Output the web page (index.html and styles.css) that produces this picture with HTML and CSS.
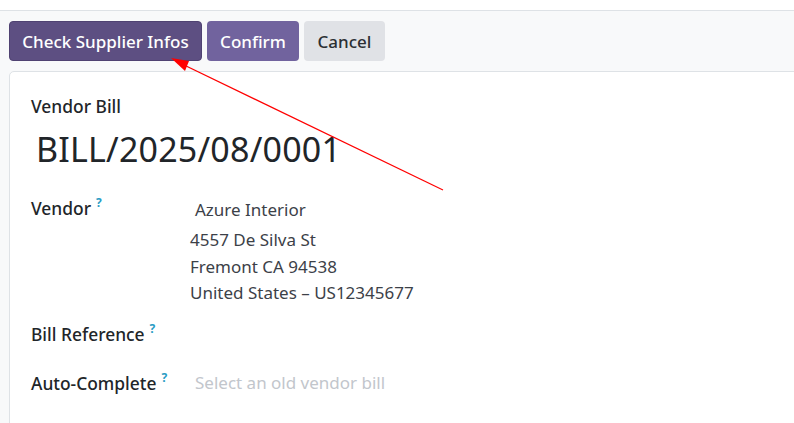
FILE: index.html
```html
<!DOCTYPE html>
<html>
<head>
<meta charset="utf-8">
<link rel="stylesheet" href="styles.css">
</head>
<body>
<div class="page">
  <div class="topstrip"></div>
  <div class="panel">
    <button class="btn btn-dark">Check Supplier Infos</button>
    <button class="btn btn-primary">Confirm</button>
    <button class="btn btn-light">Cancel</button>
  </div>
  <div class="sheet">
    <div class="doc-label">Vendor Bill</div>
    <h1 class="doc-title">BILL/2025/08/0001</h1>
    <div class="fields">
      <div class="label">Vendor<sup class="help">?</sup></div>
      <div class="value">
        <div class="partner">Azure Interior</div>
        <div class="addr">4557 De Silva St</div>
        <div class="addr">Fremont CA 94538</div>
        <div class="addr">United States – US12345677</div>
      </div>
      <div class="label row-ref">Bill Reference<sup class="help">?</sup></div>
      <div class="value row-ref"></div>
      <div class="label row-auto">Auto-Complete<sup class="help">?</sup></div>
      <div class="value row-auto"><span class="placeholder">Select an old vendor bill</span></div>
    </div>
  </div>
  <svg class="arrow" width="794" height="423" viewBox="0 0 794 423">
    <line x1="443" y1="190" x2="182" y2="64" stroke="#ff0000" stroke-width="1.2"/>
    <polygon points="171,58 189,61 185,71" fill="#ff0000"/>
  </svg>
</div>
</body>
</html>
```
FILE: styles.css
```css
html, body {
  margin: 0;
  padding: 0;
  overflow: hidden;
}
body {
  font-family: "Noto Sans", "Open Sans", sans-serif;
  color: #212529;
  background: #f8f9fa;
}
.page {
  position: relative;
  width: 794px;
  height: 423px;
  overflow: hidden;
}
.topstrip {
  height: 10px;
  background: #ffffff;
  border-bottom: 1px solid #dee2e6;
}
.panel {
  display: flex;
  gap: 5px;
  padding: 10px 9px 0 9px;
  height: 50px;
  box-sizing: content-box;
}
.btn {
  font-family: inherit;
  font-size: 17px;
  font-weight: 500;
  height: 40px;
  border: none;
  border-radius: 4px;
  padding: 0;
  cursor: pointer;
}
.btn-dark {
  background: #5d4f82;
  color: #ffffff;
  width: 193px;
  border: 1px solid #4f4272;
}
.btn-primary {
  background: #71639e;
  color: #ffffff;
  width: 92px;
}
.btn-light {
  background: #e0e2e6;
  color: #2b2f33;
  width: 81px;
}
.sheet {
  margin-left: 9px;
  width: 900px;
  height: 400px;
  background: #ffffff;
  border: 1px solid #dee2e6;
  border-radius: 5px 0 0 0;
  padding: 22px 0 0 21px;
  box-sizing: border-box;
}
.doc-label {
  font-size: 17.4px;
  font-weight: 500;
  line-height: 24px;
}
.doc-title {
  margin: 7px 0 0 5px;
  font-size: 34px;
  font-weight: 400;
  line-height: 48px;
  letter-spacing: 0.2px;
}
.fields {
  display: grid;
  grid-template-columns: 159px 1fr;
  margin-top: 23px;
}
.label {
  font-size: 17.4px;
  font-weight: 500;
  line-height: 24px;
}
.help {
  color: #2a9cc4;
  font-size: 12px;
  font-weight: 700;
  margin-left: 5px;
  vertical-align: 8px;
  line-height: 0;
}
.value {
  font-size: 17px;
  color: #3c4148;
}
.partner {
  padding-left: 5px;
  line-height: 24px;
  padding-top: 2px;
  padding-bottom: 5px;
}
.addr {
  line-height: 26.5px;
}
.row-ref {
  margin-top: 15px;
}
.row-auto {
  margin-top: 25px;
}
.placeholder {
  padding-left: 5px;
  color: #c2c6cc;
  line-height: 24px;
}
.arrow {
  position: absolute;
  left: 0;
  top: 0;
  pointer-events: none;
}
```
